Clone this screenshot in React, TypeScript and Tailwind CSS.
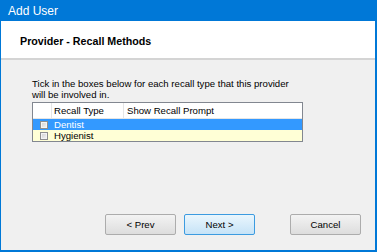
import React from "react";

const rows = [
  { name: "Dentist", selected: true },
  { name: "Hygienist", selected: false },
];

const CheckBox = () => (
  <span className="block w-[8px] h-[8px] border border-[#8e8f8f] bg-[#f4f4f4] p-[1px]">
    <span className="block w-full h-full bg-gradient-to-br from-[#d6d6d6] to-[#f0f0f0]" />
  </span>
);

const Btn = ({ label, primary }: { label: string; primary?: boolean }) => (
  <button
    type="button"
    className={`w-[71px] h-[21px] rounded-[2px] border text-[9.6px] text-black leading-none ${
      primary
        ? "border-[#3c9be0] bg-gradient-to-b from-[#eaf6fd] to-[#c6e3f7]"
        : "border-[#acacac] bg-gradient-to-b from-[#f3f3f3] to-[#dddddd]"
    }`}
  >
    {label}
  </button>
);

export default function App() {
  return (
    <div
      className="w-[377px] h-[252px] bg-[#0078d7] flex flex-col overflow-hidden"
      style={{ fontFamily: '"Liberation Sans", Arial, sans-serif' }}
    >
      <div className="h-[21px] shrink-0 pl-[8px] flex items-center text-white text-[12px] leading-none pt-[1px]">
        Add User
      </div>
      <div className="flex-1 ml-[1px] mr-[2px] mb-[2px] flex flex-col">
        <div className="h-[39px] shrink-0 bg-white pl-[19px] pt-[14px] border-b-2 border-[#d4d4d4]">
          <div className="font-bold text-[10.7px] leading-[13px] text-black">Provider - Recall Methods</div>
        </div>
        <div className="flex-1 bg-[#f0f0f0] flex flex-col pt-[18px] pl-[31px] pb-[15px]">
          <p className="text-[9.6px] leading-[11px] text-black w-[270px]">
            Tick in the boxes below for each recall type that this provider will be involved in.
          </p>
          <div className="mt-[2px] w-[271px] border border-[#828790] bg-white text-[9.6px] leading-none">
            <div className="flex h-[16px] items-center bg-white border-b border-[#e5e5e5]">
              <div className="w-[19px] h-full border-r border-[#e5e5e5]" />
              <div className="w-[72px] h-full border-r border-[#e5e5e5] pl-[2px] flex items-center">Recall Type</div>
              <div className="flex-1 h-full pl-[3px] flex items-center">Show Recall Prompt</div>
            </div>
            {rows.map((r) => (
              <div
                key={r.name}
                className={`flex h-[11px] items-center ${
                  r.selected ? "bg-[#3399ff] text-white" : "bg-[#ffffd6] text-black"
                }`}
              >
                <div className="w-[19px] flex justify-center pl-[3px]">
                  <CheckBox />
                </div>
                <div className="pl-[2px]">{r.name}</div>
              </div>
            ))}
          </div>
          <div className="flex-1" />
          <div className="flex items-center pl-[73px]">
            <Btn label="< Prev" />
            <div className="w-[8px]" />
            <Btn label="Next >" primary />
            <div className="w-[35px]" />
            <Btn label="Cancel" />
          </div>
        </div>
      </div>
    </div>
  );
}
